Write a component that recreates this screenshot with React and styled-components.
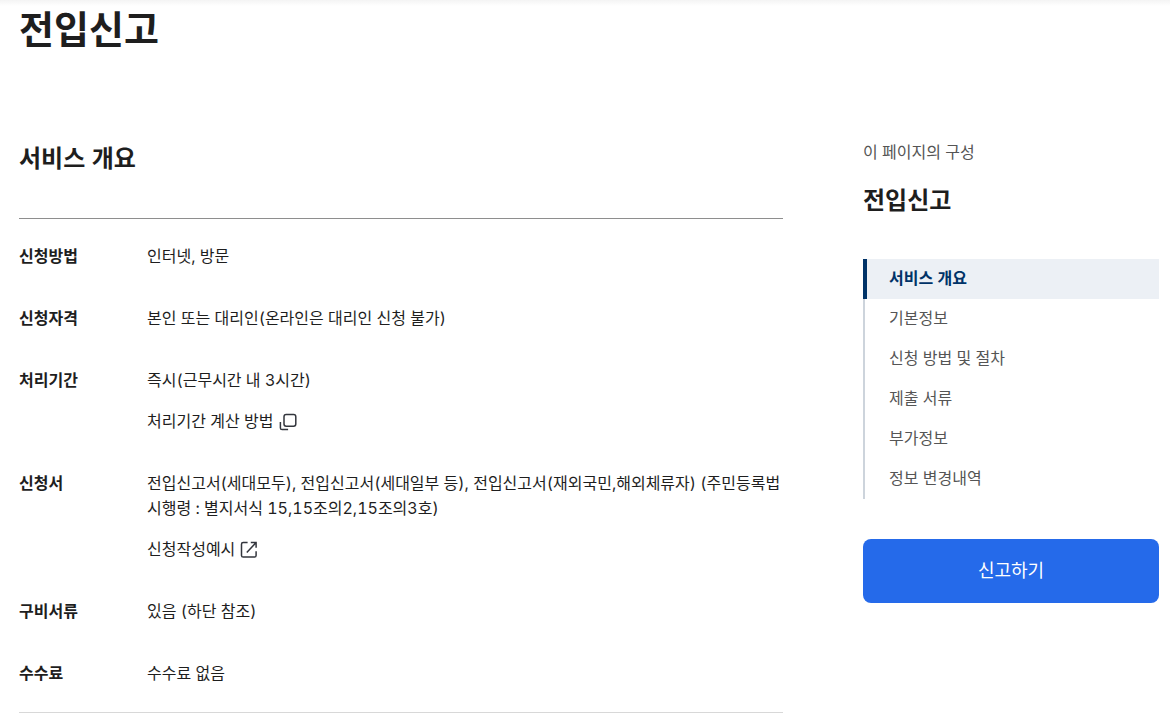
import React from "react";
import styled, { createGlobalStyle, css } from "styled-components";

const GlobalStyle = createGlobalStyle`
  *, *::before, *::after { box-sizing: border-box; }
  body {
    margin: 0;
    background: #fff;
    color: #1e1e1e;
    font-family: Inter, "Noto Sans CJK KR", sans-serif;
    font-size: 16px;
    line-height: 25px;
    font-variant-numeric: tabular-nums;
    word-break: keep-all;
  }
  h1, h2, p, dl, dd, ul { margin: 0; padding: 0; }
  ul { list-style: none; }
`;

const Page = styled.div`
  padding: 0 11px 11px 19px;
  background: linear-gradient(#f4f4f4, #fff) no-repeat top / 100% 6px;
`;

const PageTitle = styled.h1`
  font-size: 38px;
  line-height: 58px;
  font-weight: 700;
`;

const Columns = styled.div`
  display: grid;
  grid-template-columns: minmax(0, 1fr) 296px;
  gap: 80px;
  align-items: start;
  padding-top: 81px;
`;

const Title = styled.h2`
  font-size: 24px;
  line-height: 36px;
  font-weight: 700;
`;

const Summary = styled.section`
  padding-top: 2px;
`;

const Details = styled.dl`
  display: flex;
  flex-direction: column;
  gap: 37px;
  margin-top: 41px;
  padding: 25px 0 26px;
  border-top: 1px solid #8e8e8e;
  border-bottom: 1px solid #d8d8d8;
`;

const Row = styled.div`
  display: flex;
`;

const Label = styled.dt`
  flex: 0 0 128px;
  font-weight: 700;
`;

const Value = styled.dd`
  flex: 1;
  display: flex;
  flex-direction: column;
  align-items: flex-start;
  gap: 16px;
`;

const linkLook = css`
  display: inline-flex;
  align-items: center;
  gap: 4px;
  padding: 0;
  border: 0;
  background: none;
  color: inherit;
  font: inherit;
  text-decoration: none;
  cursor: pointer;
`;

const TextButton = styled.button`${linkLook}`;
const TextLink = styled.a`${linkLook}`;

const Icon = styled.svg`
  width: 20px;
  height: 20px;
  fill: none;
  stroke: #33363d;
  stroke-width: 1.5;
`;

const Aside = styled.aside`
  display: flex;
  flex-direction: column;
  padding-top: 1px;
`;

const Caption = styled.p`
  color: #555;
`;

const AsideTitle = styled(Title)`
  margin-top: 18px;
`;

const NavList = styled.ul`
  margin: 40px 0;
`;

const NavLink = styled.a`
  display: block;
  height: 40px;
  padding: 7px 16px 8px ${(p) => (p.$current ? "22px" : "24px")};
  border-left: ${(p) => (p.$current ? "4px solid #003368" : "2px solid #cdd4dc")};
  background: ${(p) => (p.$current ? "#ecf0f5" : "transparent")};
  color: ${(p) => (p.$current ? "#003368" : "#555")};
  font-weight: ${(p) => (p.$current ? 700 : 400)};
  text-decoration: none;
`;

const SubmitButton = styled.button`
  height: 64px;
  padding: 0 24px 4px;
  border: 0;
  border-radius: 8px;
  background: #256aea;
  color: #fff;
  font-family: inherit;
  font-size: 18px;
  font-weight: 400;
  cursor: pointer;
`;

const PopupIcon = () => (
  <Icon viewBox="0 0 20 20" aria-hidden="true">
    <rect x="7" y="2.5" width="11.8" height="11.8" rx="2.2" />
    <path d="M3.4 9.9v6a1.7 1.7 0 0 0 1.7 1.7h6" />
  </Icon>
);

const ExternalIcon = () => (
  <Icon viewBox="0 0 20 20" aria-hidden="true">
    <path d="M8.6 2.5H4.2a1.7 1.7 0 0 0-1.7 1.7v11.2a1.7 1.7 0 0 0 1.7 1.7h11.2a1.7 1.7 0 0 0 1.7-1.7v-4.2" />
    <path d="M11.8 2.5h5.3v5.3M17.1 2.5L7.8 12.5" />
  </Icon>
);

const sections = ["서비스 개요", "기본정보", "신청 방법 및 절차", "제출 서류", "부가정보", "정보 변경내역"];

const details = [
  { label: "신청방법", text: "인터넷, 방문" },
  { label: "신청자격", text: "본인 또는 대리인(온라인은 대리인 신청 불가)" },
  {
    label: "처리기간",
    text: "즉시(근무시간 내 3시간)",
    extra: <TextButton type="button">처리기간 계산 방법<PopupIcon /></TextButton>,
  },
  {
    label: "신청서",
    text: "전입신고서(세대모두), 전입신고서(세대일부 등), 전입신고서(재외국민,해외체류자) (주민등록법 시행령 : 별지서식 15,15조의2,15조의3호)",
    extra: <TextLink href="#example">신청작성예시<ExternalIcon /></TextLink>,
  },
  { label: "구비서류", text: "있음 (하단 참조)" },
  { label: "수수료", text: "수수료 없음" },
];

export default function App() {
  return (
    <Page>
      <GlobalStyle />
      <PageTitle>전입신고</PageTitle>
      <Columns>
        <Summary id="section-0">
          <Title>서비스 개요</Title>
          <Details>
            {details.map((d) => (
              <Row key={d.label}>
                <Label>{d.label}</Label>
                <Value>
                  <p>{d.text}</p>
                  {d.extra}
                </Value>
              </Row>
            ))}
          </Details>
        </Summary>
        <Aside>
          <Caption>이 페이지의 구성</Caption>
          <AsideTitle>전입신고</AsideTitle>
          <nav aria-label="이 페이지의 구성">
            <NavList>
              {sections.map((name, i) => (
                <li key={name}>
                  <NavLink href={`#section-${i}`} $current={i === 0} aria-current={i === 0 ? "true" : undefined}>
                    {name}
                  </NavLink>
                </li>
              ))}
            </NavList>
          </nav>
          <SubmitButton type="button">신고하기</SubmitButton>
        </Aside>
      </Columns>
    </Page>
  );
}
